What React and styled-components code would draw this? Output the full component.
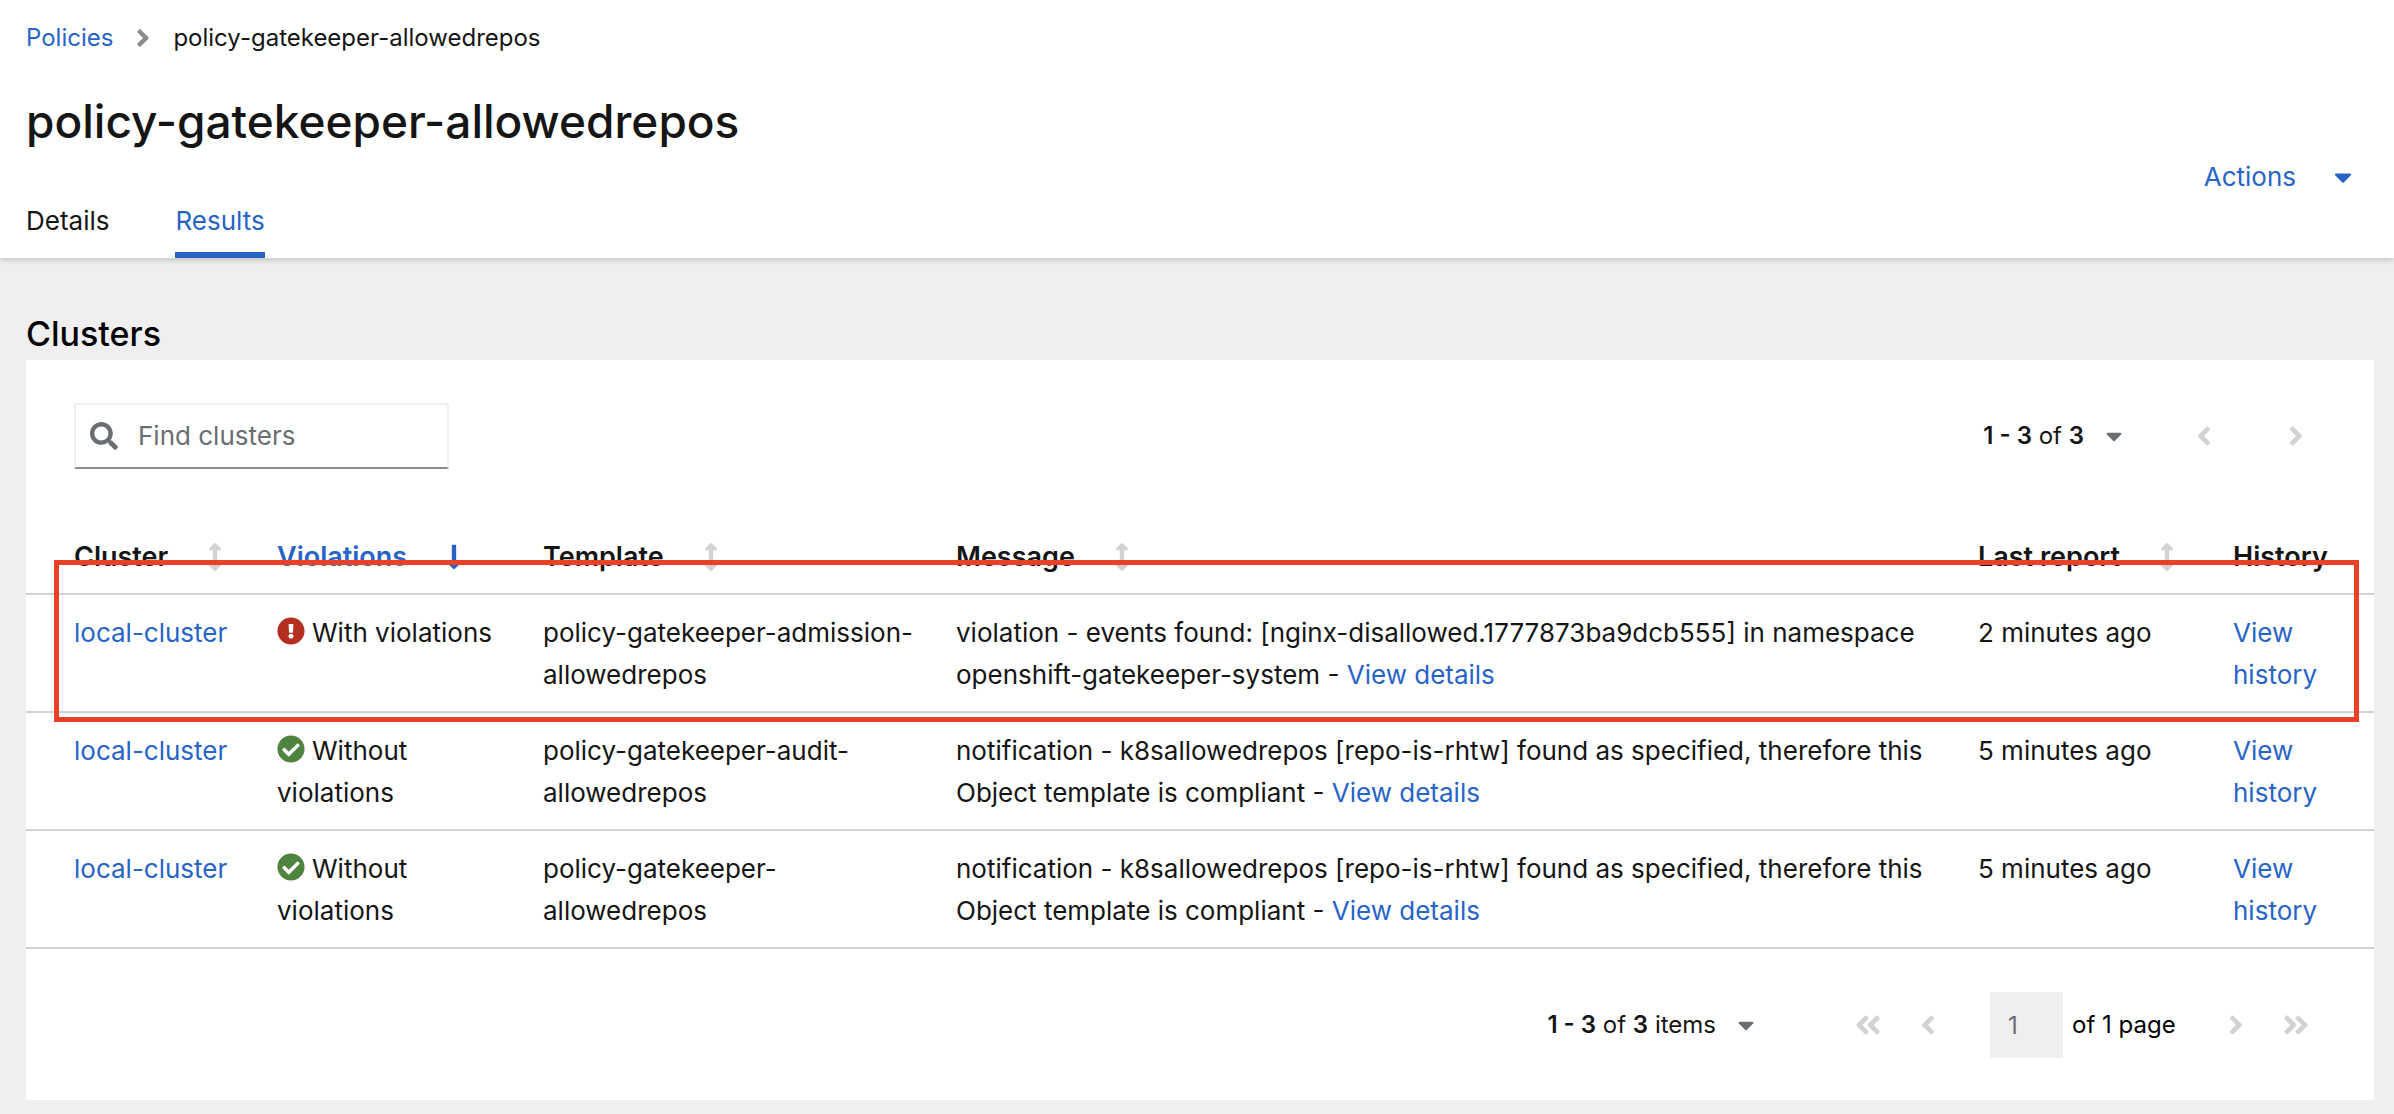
import React from "react";
import styled, { createGlobalStyle } from "styled-components";
import {
  FaAngleDoubleLeft,
  FaAngleDoubleRight,
  FaAngleLeft,
  FaAngleRight,
  FaArrowsAltV,
  FaCaretDown,
  FaCheckCircle,
  FaExclamationCircle,
  FaLongArrowAltDown,
  FaSearch,
} from "react-icons/fa";

const color = {
  text: "#151515",
  link: "#2864c7",
  muted: "#6a6e73",
  disabled: "#d2d2d2",
  page: "#efefef",
  danger: "#b52e20",
  success: "#4f8440",
  highlight: "#ea4126",
};

const GlobalStyle = createGlobalStyle`
  *, *::before, *::after { box-sizing: border-box; }
  body {
    margin: 0;
    background: ${color.page};
    color: ${color.text};
    font-family: Inter, "Liberation Sans", sans-serif;
    font-size: 26px;
    line-height: 42px;
  }
  button, input { font: inherit; color: inherit; }
  button {
    margin: 0;
    padding: 0;
    border: 0;
    background: none;
    cursor: pointer;
  }
  svg { flex: none; display: block; }
`;

const PageHeader = styled.header`
  position: relative;
  display: flex;
  justify-content: space-between;
  align-items: flex-end;
  padding: 20px 42px 0 26px;
  background: #fff;
  box-shadow: 0 2px 6px rgba(0, 0, 0, 0.2);
`;

const Breadcrumb = styled.ol`
  display: flex;
  align-items: center;
  margin: 0;
  padding: 0;
  list-style: none;
  font-size: 24px;
  line-height: 36px;

  li {
    display: flex;
    align-items: center;
  }
  svg {
    width: 14px;
    height: 28px;
    margin: 0 23px;
    color: #8a8d90;
  }
`;

const Link = styled.a`
  color: ${color.link};
  text-decoration: none;
`;

const Title = styled.h1`
  margin: 35px 0 49px;
  font-size: 46px;
  font-weight: 500;
  line-height: 60px;
`;

const Tabs = styled.nav`
  display: flex;
  gap: 66px;
`;

const Tab = styled.button`
  padding-bottom: 10px;
  border-bottom: 6px solid ${(p) => (p.$active ? color.link : "transparent")};
  color: ${(p) => (p.$active ? color.link : color.text)};
`;

const ActionsToggle = styled.button`
  display: flex;
  align-items: center;
  gap: 38px;
  margin-bottom: 60px;
  color: ${color.link};

  svg {
    width: 18px;
    height: 28px;
  }
`;

const Content = styled.main`
  padding: 54px 20px 14px 26px;
`;

const SectionTitle = styled.h2`
  margin: 0 0 4px;
  color: #000;
  font-size: 34px;
  font-weight: 500;
  line-height: 44px;
`;

const Card = styled.section`
  background: #fff;
`;

const Toolbar = styled.div`
  display: flex;
  justify-content: space-between;
  align-items: center;
  padding: 43px 48px 50px;
`;

const SearchBox = styled.label`
  display: flex;
  align-items: center;
  gap: 20px;
  width: 375px;
  height: 66px;
  padding: 0 14px;
  border: 2px solid #f0f0f0;
  border-bottom-color: #8a8d90;
  color: ${color.muted};

  svg {
    width: 28px;
    height: 28px;
  }
  input {
    flex: 1;
    min-width: 0;
    padding: 0;
    border: 0;
    outline: 0;
    background: none;
  }
  input::placeholder {
    color: ${color.muted};
    opacity: 1;
  }
`;

const Pagination = styled.div`
  display: flex;
  align-items: center;
  font-size: 24px;
`;

const RangeToggle = styled.button`
  display: flex;
  align-items: center;
  gap: 22px;
  margin-right: ${(p) => (p.$wide ? 84 : 52)}px;

  b {
    font-weight: 600;
  }
  svg {
    width: 16px;
    height: 26px;
    color: ${color.muted};
  }
`;

const Pager = styled.div`
  display: flex;
  align-items: center;
  gap: ${(p) => (p.$spaced ? 32 : 0)}px;
`;

const PageButton = styled.button`
  display: flex;
  justify-content: center;
  align-items: center;
  width: 60px;
  height: 42px;
  color: ${color.disabled};

  svg {
    height: 30px;
    width: auto;
  }
`;

const PageField = styled.label`
  display: flex;
  align-items: center;
  gap: 9px;
  width: 216px;
  margin-left: 32px;
  color: #000;

  input {
    width: 73px;
    height: 66px;
    padding: 0 18px;
    border: 0;
    background: ${color.page};
    color: ${color.muted};
  }
`;

const TableFrame = styled.div`
  position: relative;
`;

const Table = styled.table`
  width: 100%;
  border-collapse: separate;
  border-spacing: 0;
  table-layout: fixed;

  th,
  td {
    padding: 17px 8px 15px 24px;
    border-bottom: 2px solid ${color.disabled};
    text-align: left;
    vertical-align: top;
  }
  th:first-child,
  td:first-child {
    padding-left: 48px;
  }
`;

const Column = styled.col`
  width: ${(p) => (p.$width ? `${p.$width}px` : "auto")};
`;

const HeadCell = styled.th`
  font-size: 27px;
  font-weight: 600;
  white-space: nowrap;
`;

const SortButton = styled.button`
  display: flex;
  align-items: center;
  gap: 40px;
  color: ${(p) => (p.$sorted ? color.link : color.text)};

  svg {
    width: 14px;
    height: 28px;
    color: ${(p) => (p.$sorted ? color.link : color.disabled)};
  }
`;

const StatusIcon = styled.span`
  color: ${(p) => (p.$ok ? color.success : color.danger)};

  svg {
    display: inline-block;
    width: 28px;
    height: 28px;
    margin-right: 7px;
    vertical-align: -3px;
  }
`;

const RowHighlight = styled.div`
  position: absolute;
  top: 41px;
  left: 28px;
  right: 15px;
  height: 162px;
  border: 5px solid ${color.highlight};
  pointer-events: none;
`;

const Footer = styled.div`
  display: flex;
  justify-content: flex-end;
  padding: 43px 48px 42px;
`;

const columns = [
  { label: "Cluster", width: 227, sort: "none" },
  { label: "Violations", width: 266, sort: "desc" },
  { label: "Template", width: 413, sort: "none" },
  { label: "Message", sort: "none" },
  { label: "Last report", width: 255, sort: "none" },
  { label: "History", width: 165 },
];

const compliant =
  "notification - k8sallowedrepos [repo-is-rhtw] found as specified, therefore this Object template is compliant - ";

const rows = [
  {
    ok: false,
    template: "policy-gatekeeper-admission-allowedrepos",
    message:
      "violation - events found: [nginx-disallowed.1777873ba9dcb555] in namespace openshift-gatekeeper-system - ",
    reported: "2 minutes ago",
  },
  {
    ok: true,
    template: "policy-gatekeeper-audit-allowedrepos",
    message: compliant,
    reported: "5 minutes ago",
  },
  {
    ok: true,
    template: "policy-gatekeeper-allowedrepos",
    message: compliant,
    reported: "5 minutes ago",
  },
];

function ClusterTable() {
  return (
    <TableFrame>
      <Table>
        <colgroup>
          {columns.map((c) => (
            <Column key={c.label} $width={c.width} />
          ))}
        </colgroup>
        <thead>
          <tr>
            {columns.map((c) => (
              <HeadCell
                key={c.label}
                scope="col"
                aria-sort={c.sort === "desc" ? "descending" : undefined}
              >
                {c.sort ? (
                  <SortButton type="button" $sorted={c.sort === "desc"}>
                    {c.label}
                    {c.sort === "desc" ? <FaLongArrowAltDown /> : <FaArrowsAltV />}
                  </SortButton>
                ) : (
                  c.label
                )}
              </HeadCell>
            ))}
          </tr>
        </thead>
        <tbody>
          {rows.map((row) => (
            <tr key={row.template}>
              <td>
                <Link href="#cluster">local-cluster</Link>
              </td>
              <td>
                <StatusIcon $ok={row.ok}>
                  {row.ok ? <FaCheckCircle /> : <FaExclamationCircle />}
                </StatusIcon>
                {row.ok ? "Without violations" : "With violations"}
              </td>
              <td>{row.template}</td>
              <td>
                {row.message}
                <Link href="#details">View details</Link>
              </td>
              <td>{row.reported}</td>
              <td>
                <Link href="#history">View history</Link>
              </td>
            </tr>
          ))}
        </tbody>
      </Table>
      <RowHighlight />
    </TableFrame>
  );
}

export default function App() {
  return (
    <>
      <GlobalStyle />
      <PageHeader>
        <div>
          <Breadcrumb>
            <li>
              <Link href="#policies">Policies</Link>
            </li>
            <li>
              <FaAngleRight />
              policy-gatekeeper-allowedrepos
            </li>
          </Breadcrumb>
          <Title>policy-gatekeeper-allowedrepos</Title>
          <Tabs>
            <Tab type="button">Details</Tab>
            <Tab type="button" $active>
              Results
            </Tab>
          </Tabs>
        </div>
        <ActionsToggle type="button">
          Actions
          <FaCaretDown />
        </ActionsToggle>
      </PageHeader>

      <Content>
        <SectionTitle>Clusters</SectionTitle>
        <Card>
          <Toolbar>
            <SearchBox>
              <FaSearch />
              <input type="search" placeholder="Find clusters" aria-label="Find clusters" />
            </SearchBox>
            <Pagination>
              <RangeToggle type="button">
                <span>
                  <b>1 - 3</b> of <b>3</b>
                </span>
                <FaCaretDown />
              </RangeToggle>
              <Pager $spaced>
                <PageButton type="button" aria-label="Previous page">
                  <FaAngleLeft />
                </PageButton>
                <PageButton type="button" aria-label="Next page">
                  <FaAngleRight />
                </PageButton>
              </Pager>
            </Pagination>
          </Toolbar>

          <ClusterTable />

          <Footer>
            <Pagination>
              <RangeToggle type="button" $wide>
                <span>
                  <b>1 - 3</b> of <b>3</b> items
                </span>
                <FaCaretDown />
              </RangeToggle>
              <Pager>
                <PageButton type="button" aria-label="First page">
                  <FaAngleDoubleLeft />
                </PageButton>
                <PageButton type="button" aria-label="Previous page">
                  <FaAngleLeft />
                </PageButton>
                <PageField>
                  <input type="text" defaultValue="1" aria-label="Current page" />
                  <span>of 1 page</span>
                </PageField>
                <PageButton type="button" aria-label="Next page">
                  <FaAngleRight />
                </PageButton>
                <PageButton type="button" aria-label="Last page">
                  <FaAngleDoubleRight />
                </PageButton>
              </Pager>
            </Pagination>
          </Footer>
        </Card>
      </Content>
    </>
  );
}
